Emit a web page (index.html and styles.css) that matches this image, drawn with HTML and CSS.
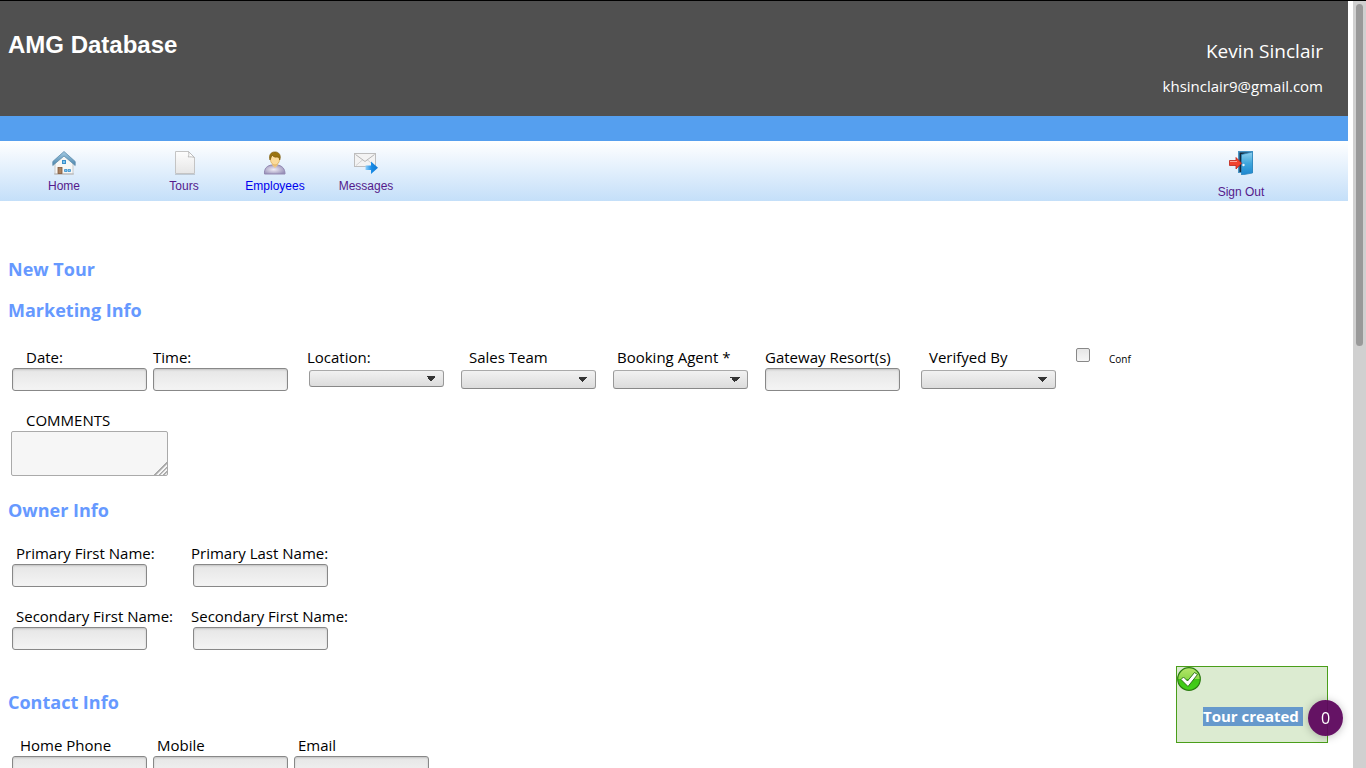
FILE: index.html
```html
<!DOCTYPE html>
<html lang="en">

<head>
    <meta charset="UTF-8">
    <meta name="viewport" content="width=device-width, initial-scale=1.0">
    <title>AMG Database</title>
    <link rel="stylesheet" href="styles.css">
</head>

<body>

    <div class="window">
        <div class="page">
            <header>
                <h1>AMG Database</h1>
                <div class="user">
                    <p class="user-name">Kevin Sinclair</p>
                    <p class="user-email">khsinclair9@gmail.com</p>
                </div>
            </header>
            <div class="stripe"></div>

            <nav>
                <a class="nav-item" href="#">
                    <svg width="24" height="24" viewBox="0 0 24 24">
                        <defs>
                            <linearGradient id="roof" x1="0" y1="0" x2="0" y2="1">
                                <stop offset="0" stop-color="#a5cbe3"/>
                                <stop offset="1" stop-color="#4b86ae"/>
                            </linearGradient>
                        </defs>
                        <path d="M3 11l9-8 9 8v12H3z" fill="#f7f7f5" stroke="#c9c9c9"/>
                        <path d="M2 23h20" stroke="#b5b5b5"/>
                        <path d="M12 .5L.8 10.500v4L12 5l11.200 9.500v-4z" fill="url(#roof)" stroke="#5d8cab" stroke-width=".8"/>
                        <rect x="10.500" y="9.500" width="3" height="3" fill="#7cc5f2" stroke="#3b8fca"/>
                        <rect x="6" y="16.500" width="4" height="6" fill="#a88160" stroke="#80583a" stroke-width=".8"/>
                        <path d="M12.500 18.500h2.500v2h-2.500zM16 18.500h2.500v2H16z" fill="#7cc5f2" stroke="#3b8fca" stroke-width=".8"/>
                    </svg>
                    <span>Home</span>
                </a>
                <a class="nav-item" href="#">
                    <svg width="24" height="24" viewBox="0 0 24 24">
                        <defs>
                            <linearGradient id="paper" x1="0" y1="0" x2="0" y2="1">
                                <stop offset="0" stop-color="#fdfdfd"/>
                                <stop offset="1" stop-color="#e6e6e6"/>
                            </linearGradient>
                        </defs>
                        <path d="M3.500.5h13l6 6V22.500h-19z" fill="url(#paper)" stroke="#c4c4c4"/>
                        <path d="M3 23.500h20" stroke="#a9b3bd" stroke-opacity=".6"/>
                        <path d="M16.500.5c.6 2 .4 4-.3 5.500 2-.3 4.300-.2 6.300.5z" fill="#fff" stroke="#bcbcbc"/>
                    </svg>
                    <span>Tours</span>
                </a>
                <a class="nav-item narrow unvisited" href="#">
                    <svg width="24" height="24" viewBox="0 0 24 24">
                        <defs>
                            <radialGradient id="shirt" cx=".45" cy=".5" r=".6">
                                <stop offset="0" stop-color="#f0edf6"/>
                                <stop offset="1" stop-color="#9890b8"/>
                            </radialGradient>
                        </defs>
                        <path d="M1.500 23C1 17.500 4 14.500 9 14h5c5 .5 8 3.500 8 9z" fill="url(#shirt)" stroke="#9389b3"/>
                        <path d="M9 14l3 3 3-3-1-2h-4z" fill="#f0c784"/>
                        <ellipse cx="12" cy="8.500" rx="4.500" ry="5.500" fill="#fbdb9c" stroke="#d6a651" stroke-width=".7"/>
                        <path d="M7 9C5.500 4 8 1 11.500 1c4.500-.5 7 3.500 5.200 8-.2-2-1-3-2.700-3-2 .5-4-.5-5-2-.5 2-1.500 3-2 5z" fill="#9b7410" stroke="#7d5a08" stroke-width=".7"/>
                    </svg>
                    <span>Employees</span>
                </a>
                <a class="nav-item" href="#">
                    <svg width="24" height="24" viewBox="0 0 24 24">
                        <defs>
                            <linearGradient id="arrow" x1="0" y1="0" x2="1" y2="0">
                                <stop offset="0" stop-color="#8fd0fa"/>
                                <stop offset=".5" stop-color="#168ae6"/>
                                <stop offset="1" stop-color="#1379d2"/>
                            </linearGradient>
                        </defs>
                        <rect x=".5" y="2.500" width="21" height="13" fill="#f3f3f3" stroke="#bdbdbd"/>
                        <path d="M2 14.500l7-6M20 14.500l-7-6" fill="none" stroke="#d2d2d2"/>
                        <path d="M1.500 3.500l9.500 7 9.500-7" fill="none" stroke="#b5b5b5"/>
                        <path d="M11.500 14.500H17v-4l7 6.300-7 6.200v-4h-5.500z" fill="url(#arrow)"/>
                    </svg>
                    <span>Messages</span>
                </a>
                <a class="nav-item sign-out" href="#">
                    <svg width="24" height="24" viewBox="0 0 24 24">
                        <defs>
                            <linearGradient id="door" x1="0" y1="0" x2="0" y2="1">
                                <stop offset="0" stop-color="#8fd0ee"/>
                                <stop offset=".5" stop-color="#3fa6dc"/>
                                <stop offset="1" stop-color="#1c86d0"/>
                            </linearGradient>
                        </defs>
                        <path d="M9 0h15v22H9z" fill="#4794c5"/>
                        <path d="M10.500 1.500H22V21H10.500z" fill="#14293a"/>
                        <path d="M12.500 3.500L23.500 1v21l-11 2z" fill="url(#door)" stroke="#2f87bd" stroke-width=".8"/>
                        <path d="M.5 9.500H7V6.500l5.500 5.700L7 18v-3.500H.5z" fill="#f2432e" stroke="#bd2216" stroke-width=".8"/>
                        <path d="M1 10.500h7" stroke="#fba497"/>
                        <circle cx="14.500" cy="14" r="1.200" fill="#e7f4fb"/>
                    </svg>
                    <span>Sign Out</span>
                </a>
            </nav>

            <form>
                <h3>New Tour</h3>

                <h3>Marketing Info</h3>
                <div class="row marketing">
                    <div class="field">
                        <label class="indent-xl" for="date">Date:</label>
                        <input type="text" id="date">
                    </div>
                    <div class="field">
                        <label class="indent-s" for="time">Time:</label>
                        <input type="text" id="time">
                    </div>
                    <div class="field spaced-more">
                        <label for="location">Location:</label>
                        <select id="location" class="short"><option></option></select>
                    </div>
                    <div class="field spaced">
                        <label class="indent-l" for="team">Sales Team</label>
                        <select id="team"><option></option></select>
                    </div>
                    <div class="field spaced">
                        <label class="indent-m" for="agent">Booking Agent *</label>
                        <select id="agent"><option></option></select>
                    </div>
                    <div class="field spaced">
                        <label class="indent-s" for="resort">Gateway Resort(s)</label>
                        <input type="text" id="resort">
                    </div>
                    <div class="field spaced-more">
                        <label class="indent-l" for="verified">Verifyed By</label>
                        <select id="verified"><option></option></select>
                    </div>
                    <div class="check">
                        <input type="checkbox" id="conf">
                        <label for="conf">Conf</label>
                    </div>
                </div>
                <div class="row">
                    <div class="field">
                        <label class="indent-xl" for="comments">COMMENTS</label>
                        <textarea id="comments"></textarea>
                    </div>
                </div>

                <h3>Owner Info</h3>
                <div class="row owner">
                    <div class="field">
                        <label class="indent-m" for="first1">Primary First Name:</label>
                        <input type="text" id="first1">
                    </div>
                    <div class="field">
                        <label for="last1">Primary Last Name:</label>
                        <input type="text" id="last1">
                    </div>
                </div>
                <div class="row owner">
                    <div class="field">
                        <label class="indent-m" for="first2">Secondary First Name:</label>
                        <input type="text" id="first2">
                    </div>
                    <div class="field">
                        <label for="last2">Secondary First Name:</label>
                        <input type="text" id="last2">
                    </div>
                </div>

                <h3 class="contact-title">Contact Info</h3>
                <div class="row">
                    <div class="field">
                        <label class="indent-l" for="phone">Home Phone</label>
                        <input type="text" id="phone">
                    </div>
                    <div class="field">
                        <label class="indent-m" for="mobile">Mobile</label>
                        <input type="text" id="mobile">
                    </div>
                    <div class="field">
                        <label class="indent-m" for="email">Email</label>
                        <input type="text" id="email">
                    </div>
                </div>
            </form>
        </div>

        <div class="scrollbar"><div class="thumb"></div></div>
    </div>

    <div class="notice">
        <svg width="24" height="24" viewBox="0 0 24 24">
            <defs>
                <linearGradient id="ok" x1="0" y1="0" x2="0" y2="1">
                    <stop offset="0" stop-color="#b5e66b"/>
                    <stop offset=".48" stop-color="#8fd94a"/>
                    <stop offset=".52" stop-color="#3fc514"/>
                    <stop offset="1" stop-color="#43d31b"/>
                </linearGradient>
            </defs>
            <circle cx="12" cy="12" r="11.300" fill="url(#ok)" stroke="#2d7d12" stroke-width="1.200"/>
            <path d="M4 12.500l2.500-2.500 4 4 7-8.500L20.500 7.500l-9.500 12z" fill="#fff" stroke="#23680e" stroke-width=".9"/>
        </svg>
        <p><span>Tour created&nbsp;</span></p>
    </div>
    <button type="button" class="counter">0</button>

</body>

</html>
```
FILE: styles.css
```css
body {
    font-family: "Open Sans", "Noto Sans", sans-serif;
    font-size: 15px;
    line-height: 22px;
    margin: 0;
    color: #000;
    background-color: #fff;
}

.window {
    display: flex;
    height: 100vh;
    box-sizing: border-box;
    border-top: 1px solid #000;
    overflow: hidden;
}

.page {
    flex: 1;
    padding-right: 5px;
    overflow: hidden;
}

.scrollbar {
    width: 13px;
    padding: 3px;
    box-sizing: border-box;
    background-color: #d0d0d0;
}

.thumb {
    height: 45%;
    border-radius: 4px;
    background-color: #999;
}

header {
    display: flex;
    justify-content: space-between;
    height: 115px;
    padding: 0 25px 0 8px;
    box-sizing: border-box;
    background-color: #505050;
    color: #fff;
}

h1 {
    margin: 30px 0 0;
    font: bold 24px/28px "Liberation Sans", Arial, sans-serif;
}

.user {
    padding-top: 38px;
    text-align: right;
}

.user p {
    margin: 0 0 11px;
    line-height: 24px;
}

.user .user-name {
    font-size: 19px;
}

.stripe {
    height: 25px;
    background-color: #559fef;
}

nav {
    display: flex;
    height: 60px;
    padding: 10px 47px 0 4px;
    box-sizing: border-box;
    background: linear-gradient(#fff, #c4dff9);
}

.nav-item {
    display: flex;
    flex-direction: column;
    align-items: center;
    width: 120px;
    font: 12px/14px "Liberation Sans", Arial, sans-serif;
    text-decoration: none;
    color: #551a8b;
}

.nav-item span {
    margin-top: 4px;
}

.narrow {
    width: 62px;
}

.unvisited {
    color: #0000ee;
}

.sign-out {
    margin-left: auto;
}

.sign-out span {
    margin-top: 10px;
}

form {
    padding: 57px 0 0 8px;
}

h3 {
    margin: 0 0 19px;
    font-size: 18px;
    line-height: 22px;
    color: #6699ff;
}

.row {
    display: flex;
    gap: 2px;
    margin: 0 0 18px 2px;
}

.marketing {
    margin-top: 25px;
}

.row + h3 {
    margin: 23px 0 21px;
}

.row + .contact-title {
    margin-top: 41px;
}

.owner {
    gap: 42px;
}

.field {
    display: flex;
    flex-direction: column;
    width: 139px;
}

.field label {
    white-space: nowrap;
}

.spaced {
    margin-left: 11px;
}

.spaced-more {
    margin-left: 15px;
}

.indent-s {
    padding-left: 2px;
}

.indent-m {
    padding-left: 6px;
}

.indent-l {
    padding-left: 10px;
}

.indent-xl {
    padding-left: 16px;
}

input[type="text"],
select {
    width: 135px;
    height: 23px;
    margin: 0 2px;
    padding: 0 4px;
    box-sizing: border-box;
    border: 1px solid #888;
    border-radius: 3px;
    background: linear-gradient(#e6e6e6, #f4f4f4);
    box-shadow: inset 0 1px 2px rgba(0, 0, 0, 0.15);
}

/* the two small triangles make up the drop-down arrow */
select {
    appearance: none;
    height: 19px;
    margin-top: 2px;
    border-color: #aaa #999 #888;
    background:
        linear-gradient(to top right, transparent 50%, #333 50%) right 12px center / 5px 5px no-repeat,
        linear-gradient(to top left, transparent 50%, #333 50%) right 7px center / 5px 5px no-repeat,
        linear-gradient(#f2f2f2, #dcdcdc);
    box-shadow: none;
}

select.short {
    height: 17px;
}

textarea {
    width: 157px;
    height: 45px;
    margin: 0 1px;
    box-sizing: border-box;
    border: 1px solid #aaa;
    border-radius: 2px;
    resize: none;
    background:
        linear-gradient(135deg, #f6f6f6 50%, transparent 50%) right bottom / 15px 15px no-repeat,
        repeating-linear-gradient(135deg, #aaa 0, #aaa 1px, #f6f6f6 2px, #f6f6f6 3px) right bottom / 15px 15px no-repeat,
        #f6f6f6;
}

.check {
    display: flex;
    margin-left: 14px;
    padding-top: 2px;
}

.check input {
    appearance: none;
    width: 14px;
    height: 14px;
    margin: 0 19px 0 2px;
    border: 1px solid #888;
    border-radius: 2px;
    background: linear-gradient(#e6e6e6, #f6f6f6);
}

.check label {
    font-size: 10px;
}

.notice {
    position: fixed;
    right: 38px;
    bottom: 25px;
    width: 152px;
    height: 77px;
    box-sizing: border-box;
    border: 1px solid #4a9e1a;
    background-color: #dcebd1;
}

.notice svg {
    display: block;
}

.notice p {
    margin: 14px 0 0 26px;
    font-weight: bold;
    white-space: nowrap;
}

.notice span {
    display: inline-block;
    line-height: 19px;
    background-color: #6699cc;
    color: #fff;
}

.counter {
    position: fixed;
    right: 23px;
    bottom: 32px;
    width: 35px;
    height: 36px;
    padding: 0;
    border: none;
    border-radius: 50%;
    background-color: rgba(93, 6, 93, 0.95);
    box-shadow: 0 1px 8px rgba(0, 0, 0, 0.25);
    color: #fff;
    font-family: inherit;
    font-size: 16px;
}
```
